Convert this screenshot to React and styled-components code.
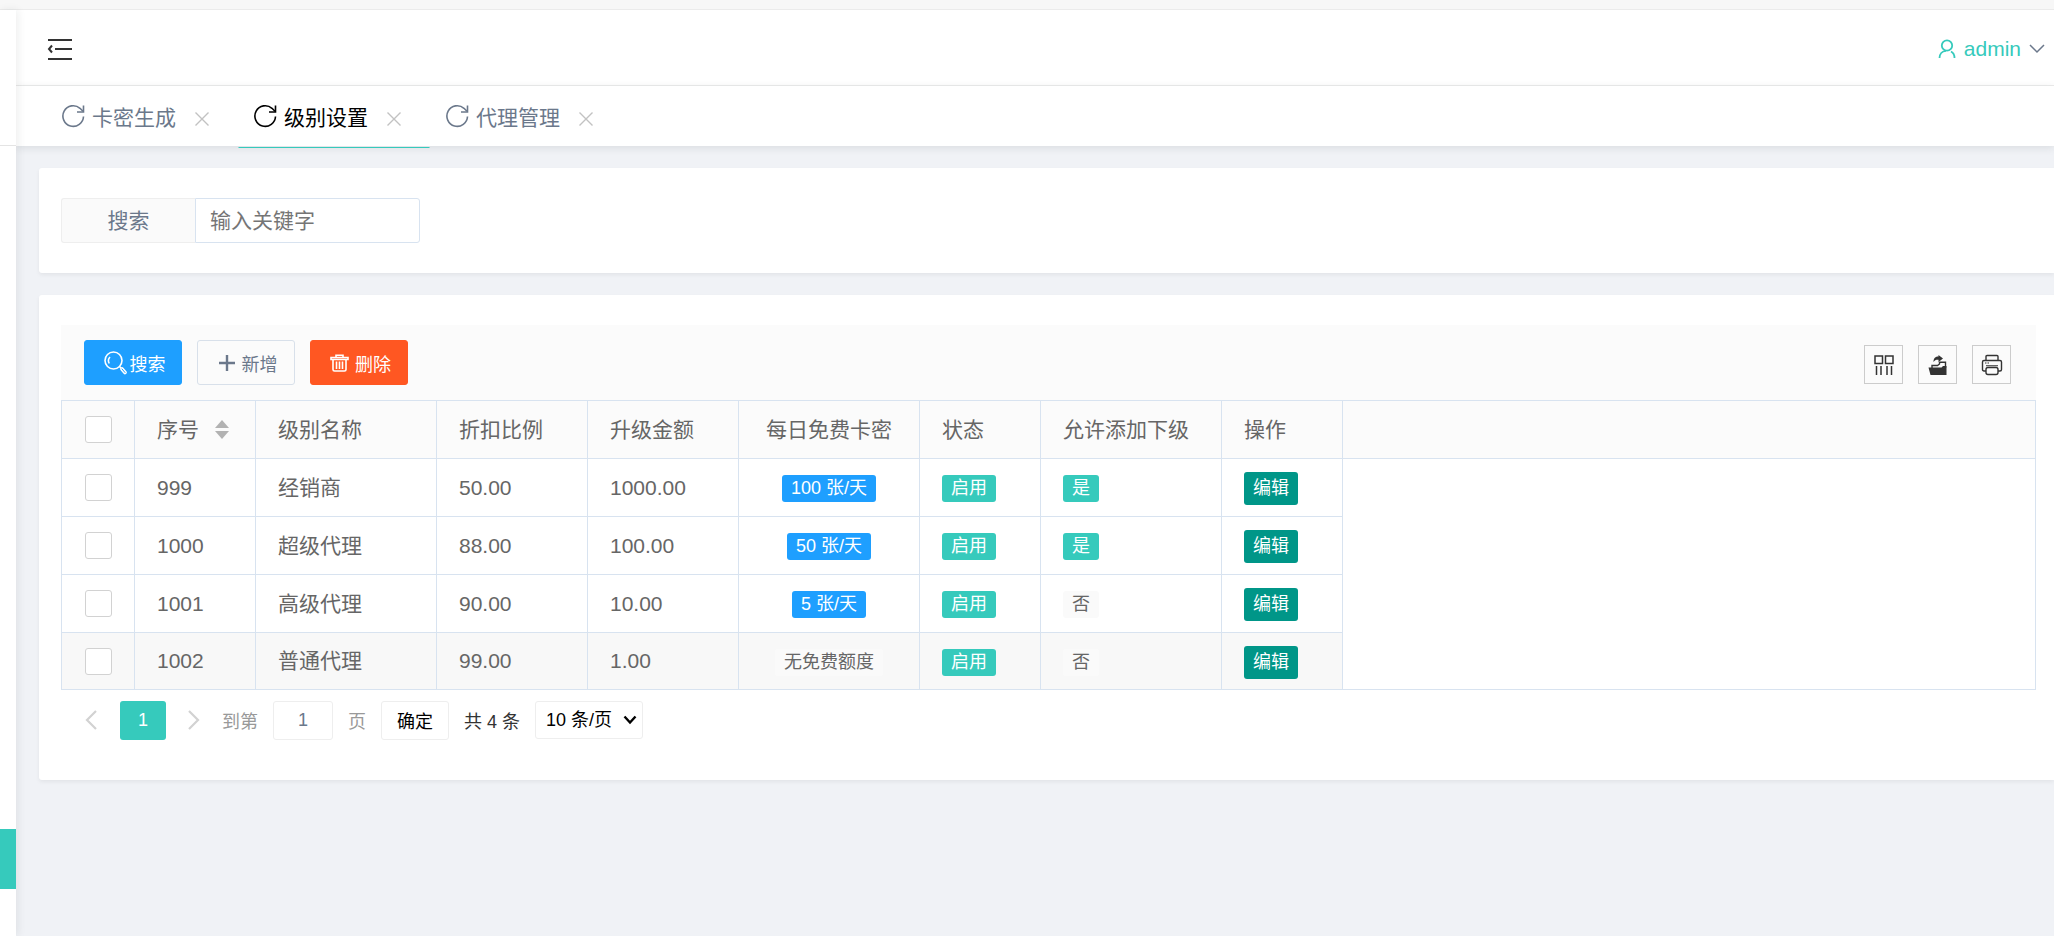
import React from "react";
import styled, { createGlobalStyle } from "styled-components";

const teal = "#36cabc";
const line = "#d8e3f0";
const fonts = `"Liberation Sans", "Noto Sans CJK SC", sans-serif`;

const GlobalStyle = createGlobalStyle`
  * { box-sizing: border-box; }
  body {
    margin: 0;
    background: #f0f2f6;
    font-family: ${fonts};
    font-size: 21px;
    color: #666;
  }
  button, input, select { font-family: inherit; margin: 0; }
`;

const Page = styled.div`
  display: flex;
  flex-direction: column;
  min-height: 100vh;
  overflow-x: hidden;
`;

const TopStrip = styled.div`
  height: 10px;
  background: #f7f7f7;
  border-bottom: 1px solid #ebebeb;
`;

const Shell = styled.div`
  display: flex;
  flex: 1;
`;

const Sidebar = styled.aside`
  position: relative;
  z-index: 2;
  width: 16px;
  flex: none;
  background: #fff;
  box-shadow: 2px 0 8px rgba(29, 35, 41, 0.08);
`;

const SideLogo = styled.div`
  height: 136px;
  border-bottom: 1px solid #e4e4e4;
`;

const SideActive = styled.div`
  height: 60px;
  margin-top: 683px;
  background: ${teal};
`;

const Main = styled.main`
  flex: 1;
  min-width: 0;
`;

const Header = styled.header`
  display: flex;
  align-items: center;
  justify-content: space-between;
  height: 76px;
  padding: 3px 9px 0 29px;
  background: #fff;
  border-bottom: 1px solid #ececec;
`;

const IconButton = styled.button`
  display: flex;
  padding: 0;
  border: 0;
  background: none;
  color: #333;
`;

const UserLink = styled.a`
  display: flex;
  align-items: center;
  gap: 8px;
  color: ${teal};
  text-decoration: none;
`;

const Tabs = styled.nav`
  position: relative;
  display: flex;
  height: 60px;
  padding-left: 30px;
  background: #fff;
  box-shadow: 0 2px 8px rgba(29, 35, 41, 0.1);
`;

const Tab = styled.div`
  display: flex;
  align-items: center;
  width: 192px;
  height: 62px;
  padding: 0 14px 2px;
  border: 1px solid transparent;
  border-bottom-color: ${(p) => (p.$active ? teal : "transparent")};
  color: ${(p) => (p.$active ? "#000" : "#6b788b")};

  a {
    display: flex;
    align-items: center;
    gap: 7px;
    color: inherit;
    text-decoration: none;
  }

  button {
    margin-left: 18px;
    padding-top: 5px;
    color: #c2c2c2;
  }
`;

const Content = styled.div`
  display: flex;
  flex-direction: column;
  gap: 22px;
  padding: 22px 0 22px 23px;
`;

const Card = styled.section`
  padding: 30px 18px 30px 22px;
  background: #fff;
  border-radius: 3px 0 0 3px;
  box-shadow: 0 2px 4px rgba(0, 0, 0, 0.06);
`;

const Field = styled.div`
  display: flex;
  height: 45px;

  label {
    width: 134px;
    border: 1px solid #eee;
    border-right: 0;
    border-radius: 3px 0 0 3px;
    background: #fafafa;
    color: #6b788b;
    line-height: 43px;
    text-align: center;
  }

  input {
    width: 225px;
    padding: 0 14px;
    border: 1px solid ${line};
    border-radius: 0 3px 3px 0;
    font-size: 21px;
    color: #333;

    &::placeholder {
      color: #757575;
    }
  }
`;

const Toolbar = styled.div`
  display: flex;
  align-items: center;
  justify-content: space-between;
  height: 75px;
  padding: 0 25px 0 23px;
  background: #fbfbfb;
`;

const Group = styled.div`
  display: flex;
  gap: 15px;
`;

const Tools = styled(Group)`
  padding-top: 4px;
`;

const Button = styled.button`
  display: flex;
  align-items: center;
  justify-content: center;
  gap: ${(p) => p.$gap || 6}px;
  width: 98px;
  height: 45px;
  padding: 0 0 0 3px;
  border: 1px solid ${(p) => p.$border || p.$bg};
  border-radius: 3px;
  background: ${(p) => p.$bg};
  color: ${(p) => p.$color || "#fff"};
  font-size: 18px;
`;

const ToolButton = styled(IconButton)`
  align-items: center;
  justify-content: center;
  width: 39px;
  height: 39px;
  border: 1px solid #ccc;
`;

const TableBox = styled.div`
  border: 1px solid ${line};
  background: linear-gradient(#fbfbfb 57px, ${line} 57px, ${line} 58px, #fff 58px);
`;

const Table = styled.table`
  table-layout: fixed;
  width: 1281px;
  border-collapse: separate;
  border-spacing: 0;

  th,
  td {
    height: 58px;
    padding: 0 0 0 22px;
    border-right: 1px solid ${line};
    border-bottom: 1px solid ${line};
    font-weight: 400;
    line-height: 42px;
    text-align: left;
    white-space: nowrap;
  }

  th:first-child,
  td:first-child {
    padding-left: 23px;
  }

  th:nth-child(6),
  td:nth-child(6) {
    padding: 0;
    text-align: center;
  }

  tbody tr:last-child td {
    height: 56px;
    border-bottom: 0;
    background: #f8f8f8;
  }
`;

const Check = styled.input`
  display: block;
  appearance: none;
  width: 27px;
  height: 27px;
  margin: 0;
  border: 1px solid #d2d2d2;
  border-radius: 3px;
  background: #fff;
`;

const SortHead = styled.span`
  display: flex;
  align-items: center;
  gap: 16px;
`;

const Badge = styled.span`
  display: inline-block;
  height: 27px;
  padding: 0 9px;
  border-radius: 3px;
  background: ${(p) => p.$bg || "#fafafa"};
  color: ${(p) => (p.$bg ? "#fff" : "#666")};
  font-size: 18px;
  line-height: 27px;
  vertical-align: middle;
`;

const EditButton = styled.button`
  height: 33px;
  padding: 0 9px;
  border: 0;
  border-radius: 3px;
  background: #009688;
  color: #fff;
  font-size: 18px;
  line-height: 33px;
  vertical-align: middle;
`;

const Pager = styled.div`
  display: flex;
  align-items: center;
  gap: 15px;
  height: 60px;
  padding-left: 24px;
  font-size: 18px;
  color: #999;

  label {
    margin-left: 7px;
  }
`;

const PageNow = styled.button`
  width: 46px;
  height: 39px;
  margin: 0 7px 0 8px;
  border: 0;
  border-radius: 3px;
  background: ${teal};
  color: #fff;
  font-size: 18px;
`;

const PageInput = styled.input`
  width: 60px;
  height: 39px;
  padding: 0;
  border: 1px solid #eee;
  border-radius: 3px;
  color: #6b788b;
  font-size: 18px;
  text-align: center;
`;

const PageOk = styled.button`
  width: 68px;
  height: 39px;
  padding: 0;
  border: 1px solid #eee;
  border-radius: 3px;
  background: #fff;
  color: #000;
  font-size: 18px;
`;

const Total = styled.span`
  color: #333;
`;

const PageSize = styled.div`
  position: relative;

  select {
    display: block;
    appearance: none;
    width: 108px;
    height: 38px;
    padding: 0 0 0 10px;
    border: 1px solid #eee;
    border-radius: 3px;
    background: #fff;
    color: #000;
    font-size: 18px;
  }

  svg {
    position: absolute;
    right: 6px;
    top: 14px;
    color: #000;
    pointer-events: none;
  }
`;

const Svg = ({ w, h, sw = 2, children }) => (
  <svg
    width={w}
    height={h || w}
    viewBox={`0 0 ${w} ${h || w}`}
    fill="none"
    stroke="currentColor"
    strokeWidth={sw}
    aria-hidden="true"
  >
    {children}
  </svg>
);

const MenuIcon = () => (
  <Svg w={30} h={26}>
    <path d="M3 4h24M10 13h17M3 23h24" />
    <path d="M7 9.500L4 13l3 3.500" />
  </Svg>
);

const RefreshIcon = () => (
  <Svg w={24} sw={1.6}>
    <path d="M22.500 12.500A10.300 10.300 0 1 1 19 4.300l3 3" />
    <path d="M22.500 1.500V8h-6.500" />
  </Svg>
);

const CloseIcon = () => (
  <Svg w={16} sw={1.4}>
    <path d="M1.500 1.500l13 13M14.500 1.500l-13 13" />
  </Svg>
);

const UserIcon = () => (
  <Svg w={18} h={20} sw={1.8}>
    <circle cx="9" cy="6.500" r="5.200" />
    <path d="M1.500 19c0-4 2.500-7 6.500-7.200M13 12.500c2.300 1.200 3.500 3.400 3.500 6.500" />
  </Svg>
);

const DownIcon = () => (
  <Svg w={16} h={10} sw={1.5}>
    <path d="M1 1l7 7 7-7" stroke="#6b788b" />
  </Svg>
);

const SearchIcon = () => (
  <Svg w={23} h={24} sw={1.6}>
    <circle cx="9.500" cy="9.500" r="8.500" />
    <path d="M5.200 12.500c-1.300-2.500-.7-5 .8-6.500" />
    <path d="M15.500 15.500l2 2" />
    <path d="M18 18l3 3.500" strokeWidth="3.600" strokeLinecap="round" />
    <path d="M18 18l3 3.500" stroke="#1e9fff" strokeWidth="1" strokeLinecap="round" />
  </Svg>
);

const PlusIcon = () => (
  <Svg w={18}>
    <path d="M9 1v16M1 9h16" strokeWidth="2.400" />
  </Svg>
);

const TrashIcon = () => (
  <Svg w={19} h={18} sw={1.6}>
    <path d="M1 3.500h17v2H1zM6 3V1.200h7V3" />
    <path d="M3 6v9.500q0 1.500 1.500 1.500h10q1.500 0 1.500-1.500V6M6.500 7.500v7.500M9.500 7.500v7.500M12.500 7.500v7.500" />
  </Svg>
);

const ColumnsIcon = () => (
  <Svg w={20} sw={1.5}>
    <path d="M1 1h7.500v7.500H1zM11.500 1H19v7.500h-7.500zM2.500 11v9M7 11v9M13 11v9M17.500 11v9" />
  </Svg>
);

const ExportIcon = () => (
  <Svg w={20} sw={1.4}>
    <path d="M4 13v-2.500h5.500l2-1.500V7.200h6V13" />
    <path d="M.5 12.500h13l1.500-1.500h3.500v9H2.500z" fill="currentColor" stroke="none" />
    <path d="M5.500 7c0-4 2-5.500 5-5.500V0L15 3.500 10.500 7V4.800C8.500 4.500 6.800 5 5.500 7z" fill="currentColor" stroke="none" />
  </Svg>
);

const PrintIcon = () => (
  <Svg w={22} sw={1.4}>
    <path d="M5 6V2.500Q5 1.500 6 1.500h10q1 0 1 1V6M5 17H3q-1.500 0-1.500-1.500V8Q1.500 6.500 3 6.500h16q1.500 0 1.500 1.500v7.500q0 1.500-1.500 1.500h-2" />
    <path d="M4 9h1.500M6.500 9H8M5 11.700h12" strokeWidth="1.100" />
    <rect x="5" y="13.500" width="12" height="7" rx="2" />
  </Svg>
);

const SortIcon = () => (
  <Svg w={14} h={19}>
    <path d="M7 0l7 8H0zM7 19l7-8H0z" fill="#b2b2b2" stroke="none" />
  </Svg>
);

const PageArrow = ({ d }) => (
  <Svg w={12} h={20}>
    <path d={d} stroke="#d2d2d2" strokeWidth="2.200" />
  </Svg>
);

const tabs = ["卡密生成", "级别设置", "代理管理"];
const widths = [73, 121, 181, 151, 151, 181, 121, 181, 121];
const heads = ["级别名称", "折扣比例", "升级金额", "每日免费卡密", "状态", "允许添加下级", "操作"];
const rows = [
  { id: "999", name: "经销商", rate: "50.00", price: "1000.00", free: "100 张/天", sub: true },
  { id: "1000", name: "超级代理", rate: "88.00", price: "100.00", free: "50 张/天", sub: true },
  { id: "1001", name: "高级代理", rate: "90.00", price: "10.00", free: "5 张/天", sub: false },
  { id: "1002", name: "普通代理", rate: "99.00", price: "1.00", free: "", sub: false },
];

const Row = ({ row }) => (
  <tr>
    <td>
      <Check type="checkbox" aria-label={row.name} />
    </td>
    <td>{row.id}</td>
    <td>{row.name}</td>
    <td>{row.rate}</td>
    <td>{row.price}</td>
    <td>
      <Badge $bg={row.free && "#1e9fff"}>{row.free || "无免费额度"}</Badge>
    </td>
    <td>
      <Badge $bg={teal}>启用</Badge>
    </td>
    <td>
      <Badge $bg={row.sub && teal}>{row.sub ? "是" : "否"}</Badge>
    </td>
    <td>
      <EditButton type="button">编辑</EditButton>
    </td>
  </tr>
);

const App = () => {
  return (
    <Page>
      <GlobalStyle />
      <TopStrip />
      <Shell>
        <Sidebar>
          <SideLogo />
          <SideActive />
        </Sidebar>
        <Main>
          <Header>
            <IconButton type="button" aria-label="菜单">
              <MenuIcon />
            </IconButton>
            <UserLink href="#user">
              <UserIcon />
              admin
              <DownIcon />
            </UserLink>
          </Header>
          <Tabs>
            {tabs.map((name) => (
              <Tab key={name} $active={name === "级别设置"}>
                <a href="#tab">
                  <RefreshIcon />
                  {name}
                </a>
                <IconButton type="button" aria-label="关闭">
                  <CloseIcon />
                </IconButton>
              </Tab>
            ))}
          </Tabs>
          <Content>
            <Card>
              <Field>
                <label htmlFor="keyword">搜索</label>
                <input id="keyword" type="text" placeholder="输入关键字" />
              </Field>
            </Card>
            <Card>
              <Toolbar>
                <Group>
                  <Button type="button" $bg="#1e9fff" $gap={3}>
                    <SearchIcon />
                    搜索
                  </Button>
                  <Button type="button" $bg="#fbfbfb" $border="#d8e0ea" $color="#6b788b">
                    <PlusIcon />
                    新增
                  </Button>
                  <Button type="button" $bg="#ff5722">
                    <TrashIcon />
                    删除
                  </Button>
                </Group>
                <Tools>
                  <ToolButton type="button" aria-label="筛选列">
                    <ColumnsIcon />
                  </ToolButton>
                  <ToolButton type="button" aria-label="导出">
                    <ExportIcon />
                  </ToolButton>
                  <ToolButton type="button" aria-label="打印">
                    <PrintIcon />
                  </ToolButton>
                </Tools>
              </Toolbar>
              <TableBox>
                <Table>
                  <colgroup>
                    {widths.map((w, i) => (
                      <col key={i} width={w} />
                    ))}
                  </colgroup>
                  <thead>
                    <tr>
                      <th>
                        <Check type="checkbox" aria-label="全选" />
                      </th>
                      <th>
                        <SortHead>
                          序号
                          <SortIcon />
                        </SortHead>
                      </th>
                      {heads.map((name) => (
                        <th key={name}>{name}</th>
                      ))}
                    </tr>
                  </thead>
                  <tbody>
                    {rows.map((row) => (
                      <Row key={row.id} row={row} />
                    ))}
                  </tbody>
                </Table>
              </TableBox>
              <Pager>
                <IconButton type="button" aria-label="上一页">
                  <PageArrow d="M11 1L2 10l9 9" />
                </IconButton>
                <PageNow type="button">1</PageNow>
                <IconButton type="button" aria-label="下一页">
                  <PageArrow d="M1 1l9 9-9 9" />
                </IconButton>
                <label htmlFor="page">到第</label>
                <PageInput id="page" type="text" defaultValue="1" />
                <span>页</span>
                <PageOk type="button">确定</PageOk>
                <Total>共 4 条</Total>
                <PageSize>
                  <select aria-label="每页条数">
                    <option>10 条/页</option>
                  </select>
                  <Svg w={14} h={10} sw={2.4}>
                    <path d="M1.500 1.500L7 7.500l5.500-6" />
                  </Svg>
                </PageSize>
              </Pager>
            </Card>
          </Content>
        </Main>
      </Shell>
    </Page>
  );
};

export default App;
